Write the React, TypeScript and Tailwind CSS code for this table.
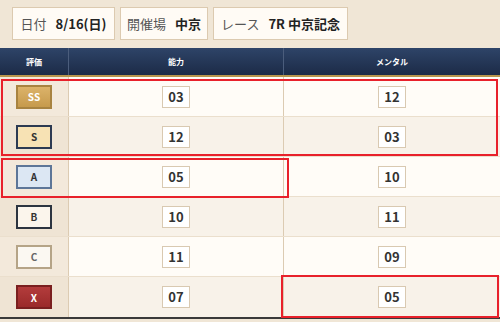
import React from "react";

type Grade = "SS" | "S" | "A" | "B" | "C" | "X";

const rows: { grade: Grade; ability: string; mental: string }[] = [
    { grade: "SS", ability: "03", mental: "12" },
    { grade: "S", ability: "12", mental: "03" },
    { grade: "A", ability: "05", mental: "10" },
    { grade: "B", ability: "10", mental: "11" },
    { grade: "C", ability: "11", mental: "09" },
    { grade: "X", ability: "07", mental: "05" },
];

const badgeStyles: Record<Grade, string> = {
    SS: "bg-gradient-to-b from-[#dcb36a] to-[#c69a4c] border-[#a88340] text-white",
    S: "bg-[#f7e2b4] border-[#2c3a52] text-[#333]",
    A: "bg-[#dce7f3] border-[#5d7698] text-[#333]",
    B: "bg-[#fbf5ec] border-[#2c3440] text-[#333]",
    C: "bg-[#fbf8f2] border-[#b5a487] text-[#666]",
    X: "bg-gradient-to-b from-[#b33c3c] to-[#9a2a2a] border-[#7a1f1f] text-white",
};

function InfoBox({ label, value, width }: { label: string; value: string; width: string }) {
    return (
        <div className={`h-[33px] flex items-center justify-center gap-[9px] bg-[#fffbf5] border border-[#dccab0] text-[13px] ${width}`}>
            <span className="text-[#555]">{label}</span>
            <span className="font-semibold text-[#222]">{value}</span>
        </div>
    );
}

function NumBox({ n }: { n: string }) {
    return (
        <div className="w-[28px] h-[22px] flex items-center justify-center bg-white border border-[#d9c9b1] text-[13px] font-semibold text-[#333]">
            {n}
        </div>
    );
}

export default function App() {
    return (
        <div className="relative w-[500px] h-[322px] bg-[#f0e6d6] overflow-hidden" style={{ fontFamily: '"Noto Sans CJK JP", "Noto Sans", sans-serif' }}>
            <div className="h-[48px] pl-[12px] pt-[7px] flex gap-[5px]">
                <InfoBox label="日付" value="8/16(日)" width="w-[103px]" />
                <InfoBox label="開催場" value="中京" width="w-[88px]" />
                <InfoBox label="レース" value="7R 中京記念" width="w-[135px]" />
            </div>

            <div className="grid grid-cols-[69px_215px_1fr] h-[29px] bg-gradient-to-b from-[#2e4468] to-[#1c2b47] border-b-2 border-[#b8954c] text-white text-[8px] font-bold">
                <div className="flex items-center justify-center border-r border-[#4b5d7c]">評価</div>
                <div className="flex items-center justify-center border-r border-[#4b5d7c]">能力</div>
                <div className="flex items-center justify-center">メンタル</div>
            </div>

            <div className="border-b-2 border-[#3a3a3a]">
                {rows.map((r, i) => (
                    <div
                        key={r.grade}
                        className={`grid grid-cols-[69px_215px_1fr] h-[40px] border-b border-[#ebdfcd] last:border-b-0 ${i % 2 === 0 ? "bg-[#fffcf7]" : "bg-[#f8f2e9]"}`}
                    >
                        <div className={`flex items-center justify-center border-r border-[#dccbb2] ${i % 2 === 0 ? "bg-[#f3e9db]" : "bg-[#efe4d4]"}`}>
                            <div className={`w-[36px] h-[24px] flex items-center justify-center border-2 text-[10px] font-bold ${badgeStyles[r.grade]}`}>
                                {r.grade}
                            </div>
                        </div>
                        <div className="flex items-center justify-center border-r border-[#dccbb2]">
                            <NumBox n={r.ability} />
                        </div>
                        <div className="flex items-center justify-center">
                            <NumBox n={r.mental} />
                        </div>
                    </div>
                ))}
            </div>

            {/* highlight frames */}
            <div className="absolute left-[1px] top-[79px] w-[497px] h-[77px] border-2 border-[#e8212b]" />
            <div className="absolute left-[1px] top-[158px] w-[288px] h-[40px] border-2 border-[#e8212b]" />
            <div className="absolute left-[281px] top-[275px] w-[218px] h-[43px] border-2 border-[#e8212b]" />
        </div>
    );
}
